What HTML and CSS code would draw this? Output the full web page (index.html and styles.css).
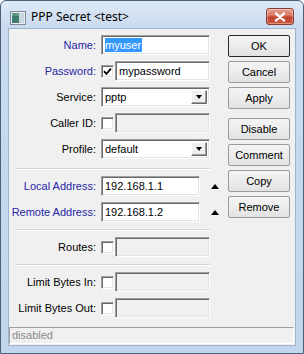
FILE: index.html
```html
<!DOCTYPE html>
<html>
<head>
<meta charset="utf-8">
<link rel="stylesheet" href="styles.css">
</head>
<body>
<div class="win">
  <div class="titlebar">
    <svg class="appicon" width="16" height="14" viewBox="0 0 16 14">
      <rect x="0.5" y="0.5" width="15" height="13" fill="#e8eef4" stroke="#7d8a96"/>
      <rect x="2" y="2" width="7" height="10" fill="#3f7d6e"/>
      <rect x="9" y="2" width="5" height="10" fill="#c9d6e2"/>
      <rect x="2" y="2" width="7" height="3" fill="#5c9a86"/>
    </svg>
    <span class="title">PPP Secret &lt;test&gt;</span>
    <div class="close">
      <svg width="12" height="10" viewBox="0 0 12 10"><path d="M2 1.5 L10 8.5 M10 1.5 L2 8.5" stroke="#fff" stroke-width="2.4" stroke-linecap="round"/></svg>
    </div>
  </div>
  <div class="client">
    <div class="main">
      <div class="form">
        <div class="row"><span class="lbl req">Name:</span><div class="edit"><span class="sel">myuser</span></div></div>
        <div class="row"><span class="lbl req">Password:</span><div class="chk"><svg width="9" height="9" viewBox="0 0 9 9"><path d="M1 4.2 L3.4 6.8 L8 1.6" fill="none" stroke="#000" stroke-width="1.8"/></svg></div><div class="edit grow">mypassword</div></div>
        <div class="row"><span class="lbl">Service:</span><div class="edit select"><span>pptp</span><span class="dd"><i class="down"></i></span></div></div>
        <div class="row"><span class="lbl">Caller ID:</span><div class="chk"></div><div class="edit grow off"></div></div>
        <div class="row"><span class="lbl">Profile:</span><div class="edit select"><span>default</span><span class="dd"><i class="down"></i></span></div></div>
        <div class="sep s1"></div>
        <div class="row r-after"><span class="lbl req">Local Address:</span><div class="edit addr">192.168.1.1</div><i class="up"></i></div>
        <div class="row"><span class="lbl req">Remote Address:</span><div class="edit addr">192.168.1.2</div><i class="up"></i></div>
        <div class="sep s2"></div>
        <div class="row r-after"><span class="lbl">Routes:</span><div class="chk"></div><div class="edit grow off"></div></div>
        <div class="sep s3"></div>
        <div class="row r-after"><span class="lbl">Limit Bytes In:</span><div class="chk"></div><div class="edit grow off"></div></div>
        <div class="row"><span class="lbl">Limit Bytes Out:</span><div class="chk"></div><div class="edit grow off"></div></div>
      </div>
      <div class="buttons">
        <div class="btn def">OK</div>
        <div class="btn">Cancel</div>
        <div class="btn">Apply</div>
        <div class="btn gap">Disable</div>
        <div class="btn">Comment</div>
        <div class="btn">Copy</div>
        <div class="btn">Remove</div>
      </div>
    </div>
    <div class="status">disabled</div>
  </div>
</div>
</body>
</html>
```
FILE: styles.css
```css
html, body {
  margin: 0;
  padding: 0;
  background: #ffffff;
}
.win {
  width: 304px;
  height: 354px;
  box-sizing: border-box;
  border: 1px solid #4a5f78;
  border-radius: 6px 6px 0 0;
  background: linear-gradient(to bottom, #dde9f6 0, #cadbef 27px, #c1d5ec 100%);
  display: flex;
  flex-direction: column;
  overflow: hidden;
  font-family: "Liberation Sans", Arial, sans-serif;
  font-size: 11px;
  color: #000;
}
.titlebar {
  height: 27px;
  flex: none;
  display: flex;
  align-items: flex-start;
  padding-left: 9px;
}
.appicon {
  margin-top: 10px;
  flex: none;
}
.title {
  margin-left: 5px;
  margin-top: 8px;
  font-family: "Noto Sans", "Open Sans", sans-serif;
  font-size: 12px;
  line-height: 16px;
  color: #000;
}
.close {
  margin-left: auto;
  margin-right: 9px;
  margin-top: 7px;
  width: 28px;
  height: 17px;
  box-sizing: border-box;
  border: 1px solid #8a3a30;
  border-radius: 3px;
  background: linear-gradient(to bottom, #eaa596 0, #d8705c 45%, #c2412b 55%, #cf5a3e 100%);
  display: flex;
  align-items: center;
  justify-content: center;
  box-shadow: inset 0 0 0 1px rgba(255,255,255,0.35);
}
.client {
  margin: 0 7px;
  height: 318px;
  flex: none;
  box-sizing: border-box;
  border: 1px solid #9fb3cc;
  background: #f0f0f0;
  display: flex;
  flex-direction: column;
}
.main {
  display: flex;
  flex: 1;
}
.form {
  width: 201px;
  padding-top: 6px;
  display: flex;
  flex-direction: column;
}
.row {
  display: flex;
  align-items: center;
  height: 20px;
  margin-top: 6px;
}
.row:first-child {
  margin-top: 0;
}
.lbl {
  width: 87px;
  margin-right: 5px;
  flex: none;
  text-align: right;
  white-space: nowrap;
  color: #000;
}
.lbl.req {
  color: #2626a6;
}
.edit {
  box-sizing: border-box;
  width: 109px;
  height: 20px;
  flex: none;
  background: #fff;
  border: 1px solid;
  border-color: #a0a0a0 #ffffff #ffffff #a0a0a0;
  box-shadow: inset 1px 1px 0 #696969, inset -1px -1px 0 #e3e3e3;
  padding: 0 2px 0 3px;
  display: flex;
  align-items: center;
  white-space: nowrap;
  overflow: hidden;
}
.edit.grow {
  width: auto;
  flex: 1;
}
.edit.off {
  background: #f0f0f0;
}
.edit.addr {
  width: 99px;
}
.sel {
  background: #3399ff;
  color: #fff;
  line-height: 14px;
  padding: 0 1px 0 0;
}
.edit.select {
  padding-right: 2px;
}
.dd {
  margin-left: auto;
  width: 16px;
  height: 14px;
  box-sizing: border-box;
  background: #f0f0f0;
  border: 1px solid;
  border-color: #ffffff #696969 #696969 #ffffff;
  box-shadow: inset -1px -1px 0 #a0a0a0;
  display: flex;
  align-items: center;
  justify-content: center;
}
.down {
  width: 0;
  height: 0;
  border-left: 3.5px solid transparent;
  border-right: 3.5px solid transparent;
  border-top: 4px solid #000;
}
.up {
  width: 0;
  height: 0;
  margin-left: 11px;
  border-left: 4px solid transparent;
  border-right: 4px solid transparent;
  border-bottom: 5px solid #000;
}
.chk {
  box-sizing: border-box;
  width: 13px;
  height: 13px;
  flex: none;
  margin-right: 1px;
  background: #fff;
  border: 1px solid;
  border-color: #a0a0a0 #ffffff #ffffff #a0a0a0;
  box-shadow: inset 1px 1px 0 #696969, inset -1px -1px 0 #e3e3e3;
  display: flex;
  align-items: center;
  justify-content: center;
}
.sep {
  margin-left: 6px;
  height: 0;
  border-top: 1px solid #d5d5d5;
  border-bottom: 1px solid #ffffff;
}
.s1 { margin-top: 9px; }
.s2 { margin-top: 7px; }
.s3 { margin-top: 7px; }
.row.r-after { margin-top: 6px; }
.buttons {
  margin-left: 18px;
  padding-top: 6px;
  width: 62px;
  display: flex;
  flex-direction: column;
}
.btn {
  box-sizing: border-box;
  height: 22px;
  margin-bottom: 4px;
  border: 1px solid #9a9a9a;
  border-radius: 2px;
  background: linear-gradient(to bottom, #f4f4f4 0, #ececec 50%, #e2e2e2 100%);
  display: flex;
  align-items: center;
  justify-content: center;
  color: #000;
}
.btn.def {
  border-color: #2a2a2a;
}
.btn.gap {
  margin-top: 5px;
}
.status {
  margin: 0 1px 1px 0;
  height: 17px;
  box-sizing: border-box;
  border: 1px solid;
  border-color: #a0a0a0 #ffffff #ffffff #a0a0a0;
  background: #f0f0f0;
  color: #8a8a8a;
  padding-left: 2px;
  line-height: 15px;
}
```
